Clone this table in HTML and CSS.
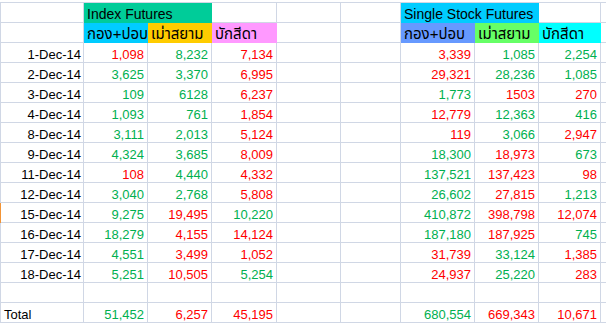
FILE: index.html
```html
<!DOCTYPE html>
<html lang="th">
<head>
  <meta charset="UTF-8">
  <title>Futures</title>
  <link rel="stylesheet" href="styles.css">
</head>
<body>
  <div class="sheet" id="sheet"></div>

  <script>
    // g = เขียว, r = แดง
    const rows = [
      ['1-Dec-14', '1,098 r', '8,232 g', '7,134 r', '3,339 r', '1,085 g', '2,254 g'],
      ['2-Dec-14', '3,625 g', '3,370 g', '6,995 r', '29,321 r', '28,236 g', '1,085 g'],
      ['3-Dec-14', '109 g', '6128 g', '6,237 r', '1,773 g', '1503 r', '270 r'],
      ['4-Dec-14', '1,093 g', '761 g', '1,854 r', '12,779 r', '12,363 g', '416 g'],
      ['8-Dec-14', '3,111 g', '2,013 g', '5,124 r', '119 r', '3,066 g', '2,947 r'],
      ['9-Dec-14', '4,324 g', '3,685 g', '8,009 r', '18,300 g', '18,973 r', '673 g'],
      ['11-Dec-14', '108 r', '4,440 g', '4,332 r', '137,521 g', '137,423 r', '98 r'],
      ['12-Dec-14', '3,040 g', '2,768 g', '5,808 r', '26,602 g', '27,815 r', '1,213 g'],
      ['15-Dec-14', '9,275 g', '19,495 r', '10,220 g', '410,872 g', '398,798 r', '12,074 r'],
      ['16-Dec-14', '18,279 g', '4,155 r', '14,124 r', '187,180 g', '187,925 r', '745 g'],
      ['17-Dec-14', '4,551 g', '3,499 r', '1,052 r', '31,739 r', '33,124 g', '1,385 r'],
      ['18-Dec-14', '5,251 g', '10,505 r', '5,254 g', '24,937 r', '25,220 g', '283 r'],
      null,
      ['Total', '51,452 g', '6,257 r', '45,195 r', '680,554 g', '669,343 r', '10,671 r']
    ];

    const sheet = document.getElementById('sheet');

    function cell(text, cls) {
      const div = document.createElement('div');
      div.className = 'cell' + (cls ? ' ' + cls : '');
      div.textContent = text || '';
      sheet.appendChild(div);
    }

    // แถวหัวตาราง
    cell('');
    cell('Index Futures', 'left title fill-teal span2');
    cell('');
    cell('');
    cell('');
    cell('Single Stock Futures', 'left title fill-sky span2');
    cell('');
    cell('');

    cell('');
    cell('กอง+ปอบ', 'left thai fill-sky');
    cell('เม่าสยาม', 'left thai fill-gold');
    cell('บักสีดา', 'left thai fill-pink');
    cell('');
    cell('');
    cell('กอง+ปอบ', 'left thai fill-blue');
    cell('เม่าสยาม', 'left thai fill-lime');
    cell('บักสีดา', 'left thai fill-aqua');
    cell('');

    rows.forEach(function (row) {
      if (!row) {
        for (let i = 0; i < 10; i++) cell('');
        return;
      }
      const first = row[0] === 'Total' ? 'left' : 'date';
      cell(row[0], first + (row[0] === '15-Dec-14' ? ' picked' : ''));
      for (let i = 1; i <= 6; i++) {
        const parts = row[i].split(' ');
        cell(parts[0], 'num ' + (parts[1] === 'g' ? 'up' : 'down'));
        if (i === 3) {
          cell('');
          cell('');
        }
      }
      cell('');
    });
  </script>
</body>
</html>
```

FILE: styles.css
```css
body {
  margin: 2px 0 0 0;
  font-family: "Liberation Sans", "Noto Sans Thai", Tahoma, sans-serif;
  font-size: 13px;
  color: #000;
  background: #fff;
  overflow: hidden;
}
.sheet {
  display: grid;
  grid-template-columns: 83px 64px 64px 65px 64px 60px 74px 64px 62px 1fr;
  grid-auto-rows: 20px;
  border-left: 1px solid #d0d7e5;
  border-top: 1px solid #d0d7e5;
}
.cell {
  box-sizing: border-box;
  border-right: 1px solid #d0d7e5;
  border-bottom: 1px solid #d0d7e5;
  display: flex;
  align-items: flex-end;
  justify-content: flex-end;
  padding: 0 3px 0 3px;
  line-height: 15px;
  white-space: nowrap;
  overflow: hidden;
}
.left {
  justify-content: flex-start;
}
.date {
  padding-right: 2px;
}
.span2 {
  grid-column: span 2;
}
.title {
  font-size: 14px;
  line-height: 16px;
}
.thai {
  font-size: 15px;
  line-height: 17px;
}
.up {
  color: #00b050;
}
.down {
  color: #ff0000;
}
.picked {
  box-shadow: -1px 0 0 #f29436;
}
.fill-teal {
  background: #00cc99;
  border-color: #00cc99;
}
.fill-sky {
  background: #00ccff;
  border-color: #00ccff;
}
.fill-gold {
  background: #ffcc00;
  border-color: #ffcc00;
}
.fill-pink {
  background: #ff99ff;
  border-color: #ff99ff;
}
.fill-blue {
  background: #6699ff;
  border-color: #6699ff;
}
.fill-lime {
  background: #66ff66;
  border-color: #66ff66;
}
.fill-aqua {
  background: #00ffff;
  border-color: #00ffff;
}
```
